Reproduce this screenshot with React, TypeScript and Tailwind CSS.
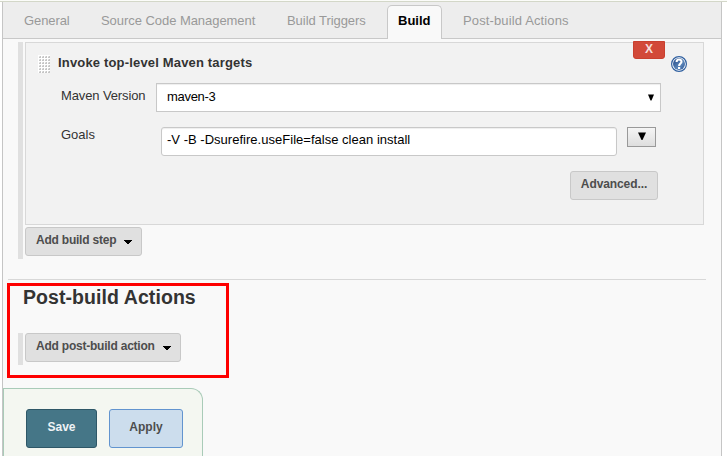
import React from "react";

type TabProps = { label: string; className: string };

function Tab({ label, className }: TabProps) {
  return <a className={`mt-[7px] whitespace-nowrap text-[13px] leading-[24px] text-[#999] ${className}`}>{label}</a>;
}

function MenuButton({ label, className }: TabProps) {
  return (
    <button className={`flex h-[29px] items-start justify-between rounded-[3px] border border-[#c8c8c8] bg-[#e0e0e0] pl-[10px] pr-[9px] ${className}`}>
      <span className="whitespace-nowrap text-[12px] font-bold leading-[25px] tracking-[-0.22px] text-[#4d4d4d]">{label}</span>
      <svg className="mt-[12px]" width="8" height="5" viewBox="0 0 8 5" shapeRendering="crispEdges">
        <path d="M0 0H8V1H7V2H6V3H5V4H3V3H2V2H1V1H0Z" fill="#000" />
      </svg>
    </button>
  );
}

const GRIP_COLUMNS = [1, 4, 7, 10];
const GRIP_ROWS = [1, 4, 7, 10, 13, 16];

function Grip() {
  return (
    <svg width="13" height="19" viewBox="0 0 13 19" shapeRendering="crispEdges">
      <path d="M0 0H12V18H0Z" fill="#fff" />
      {GRIP_ROWS.map((y) =>
        GRIP_COLUMNS.map((x) => (
          <g key={`${x}-${y}`}>
            <rect x={x} y={y} width="2" height="2" fill="#c6c6c6" />
            <rect x={x} y={y} width="1" height="1" fill="#e2e2e2" />
          </g>
        ))
      )}
    </svg>
  );
}

function HelpIcon() {
  return (
    <svg width="16" height="16" viewBox="0 0 16 16">
      <defs>
        <linearGradient id="help" x1="0" y1="0" x2="1" y2="1">
          <stop offset="0" stopColor="#1f4584" />
          <stop offset="0.6" stopColor="#5c86b9" />
          <stop offset="1" stopColor="#2a5597" />
        </linearGradient>
      </defs>
      <circle cx="8" cy="8" r="7.4" fill="#fff" stroke="#2f5f9f" strokeWidth="1.2" />
      <circle cx="8" cy="8" r="6" fill="url(#help)" />
      <path d="M5.6 6C5.6 2.8 10.5 2.8 10.5 5.7C10.5 7.5 8.1 7.6 8.1 10" fill="none" stroke="#fff" strokeWidth="2.1" />
      <path d="M7 11H9.2V13H7Z" fill="#fff" />
    </svg>
  );
}

function Triangle() {
  return (
    <svg width="8" height="8" viewBox="0 0 8 8">
      <path d="M0 0.5H8L4.5 8H3.5Z" fill="#000" />
    </svg>
  );
}

export default function App() {
  return (
    <div className="relative flex h-[456px] w-[727px] flex-col overflow-hidden bg-white font-['Liberation_Sans',Arial,sans-serif]">
      <div className="h-[2px] shrink-0 border-b border-[#d3d7c8] bg-[#fbfcf9]" />
      <div className="ml-[2px] flex w-[720px] flex-1 flex-col border-x border-[#c5c5c5] bg-[#f9f9f9]">
        <nav className="flex h-[37px] shrink-0 border-b border-[#c8c8c8] bg-[#ededed]">
          <Tab label="General" className="ml-[21px] w-[77px] tracking-[-0.1px]" />
          <Tab label="Source Code Management" className="w-[186px] tracking-[-0.05px]" />
          <Tab label="Build Triggers" className="w-[98px] tracking-[-0.05px]" />
          <a className="ml-[2px] mt-[3px] h-[34px] w-[55px] rounded-t-[5px] border border-b-0 border-[#c8c8c8] bg-[#f9f9f9] pl-[10px] pt-[3px] text-[13px] font-bold leading-[24px] text-black">
            Build
          </a>
          <Tab label="Post-build Actions" className="ml-[21px] tracking-[0.13px]" />
        </nav>

        <section className="ml-[15px] mt-[3px] flex h-[217px] w-[686px] shrink-0 flex-col border-l-[5px] border-[#e0e0e0] pl-[2px]">
          <div className="flex h-[183px] flex-col border border-[#d8d8d8] bg-[#f2f2f2]">
            <header className="flex h-[41px] items-start">
              <div className="ml-[12px] mt-[12px]">
                <Grip />
              </div>
              <h3 className="ml-[7px] mt-[10px] flex-1 whitespace-nowrap text-[13px] font-bold leading-[20px] tracking-[0.17px] text-[#333]">
                Invoke top-level Maven targets
              </h3>
              <button className="-mt-[2px] h-[18px] w-[32px] rounded-b-[3px] border border-[#c9402f] bg-[#d24939] pb-[2px] text-[12px] font-bold leading-[13px] text-[#f6dedb]">
                X
              </button>
              <div className="ml-[6px] mr-[16px] mt-[13px]">
                <HelpIcon />
              </div>
            </header>
            <div className="flex h-[43px] items-start">
              <label className="ml-[35px] mt-[2px] w-[95px] whitespace-nowrap text-[13px] leading-[20px] tracking-[-0.12px] text-[#333]">Maven Version</label>
              <div className="-mt-px flex h-[29px] w-[505px] items-center justify-between border border-[#c8c8c8] bg-white pl-[10px] pr-[6px] text-[13px] text-black shadow-[inset_0_1px_1px_#eee]">
                <span className="pb-px leading-[18px] tracking-[-0.3px]">maven-3</span>
                <svg width="6" height="7" viewBox="0 0 6 7">
                  <path d="M0 0.5H6L3.5 6.5H2.5Z" fill="#000" />
                </svg>
              </div>
            </div>
            <div className="flex h-[44px] items-start">
              <label className="ml-[35px] mt-[-2px] w-[100px] text-[13px] leading-[20px] text-[#333]">Goals</label>
              <div className="flex h-[29px] w-[456px] items-start rounded-[3px] border border-[#c8c8c8] bg-white pl-[5px] text-[13px] leading-[24px] tracking-[0.02px] text-black shadow-[inset_0_1px_1px_#eee]">
                -V -B -Dsurefire.useFile=false clean install
              </div>
              <button className="ml-[10px] flex h-[20px] w-[29px] items-start justify-center border border-[#999] bg-gradient-to-b from-[#f5f5f5] to-[#dedede] pt-[4px]">
                <Triangle />
              </button>
            </div>
            <button className="ml-[544px] h-[29px] w-[88px] rounded-[3px] border border-[#c8c8c8] bg-[#e0e0e0] pb-[3px] text-[12px] font-bold leading-[24px] tracking-[-0.1px] text-[#4d4d4d]">
              Advanced...
            </button>
          </div>
          <MenuButton label="Add build step" className="mt-[2px] w-[117px]" />
        </section>

        <hr className="ml-[5px] mt-[20px] w-[698px] border-[#d8d8d8]" />
        <h2 className="ml-[20px] mt-[3px] h-[28px] whitespace-nowrap text-[19.5px] font-bold leading-[28px] tracking-[0.07px] text-[#333]">Post-build Actions</h2>
        <section className="ml-[15px] mt-[22px] h-[32px] border-l-[5px] border-[#e0e0e0] pl-[2px]">
          <MenuButton label="Add post-build action" className="w-[156px]" />
        </section>

        <footer className="mt-auto flex h-[68px] w-[200px] items-start rounded-tr-[12px] border border-b-0 border-[#a9cbb8] bg-[#f4f7f1] pl-[22px] pt-[20px] text-[12px] font-bold">
          <button className="h-[39px] w-[71px] rounded-[3px] border border-[#2e5767] bg-[#457687] pb-[3px] text-[#eef3f5]">Save</button>
          <button className="ml-[12px] h-[39px] w-[74px] rounded-[3px] border border-[#6294cf] bg-[#ccdded] pb-[3px] text-[#4d4d4d]">Apply</button>
        </footer>
      </div>
      <div className="absolute left-[7px] top-[283px] h-[95px] w-[222px] border-[3px] border-[#fe0000]" />
    </div>
  );
}
